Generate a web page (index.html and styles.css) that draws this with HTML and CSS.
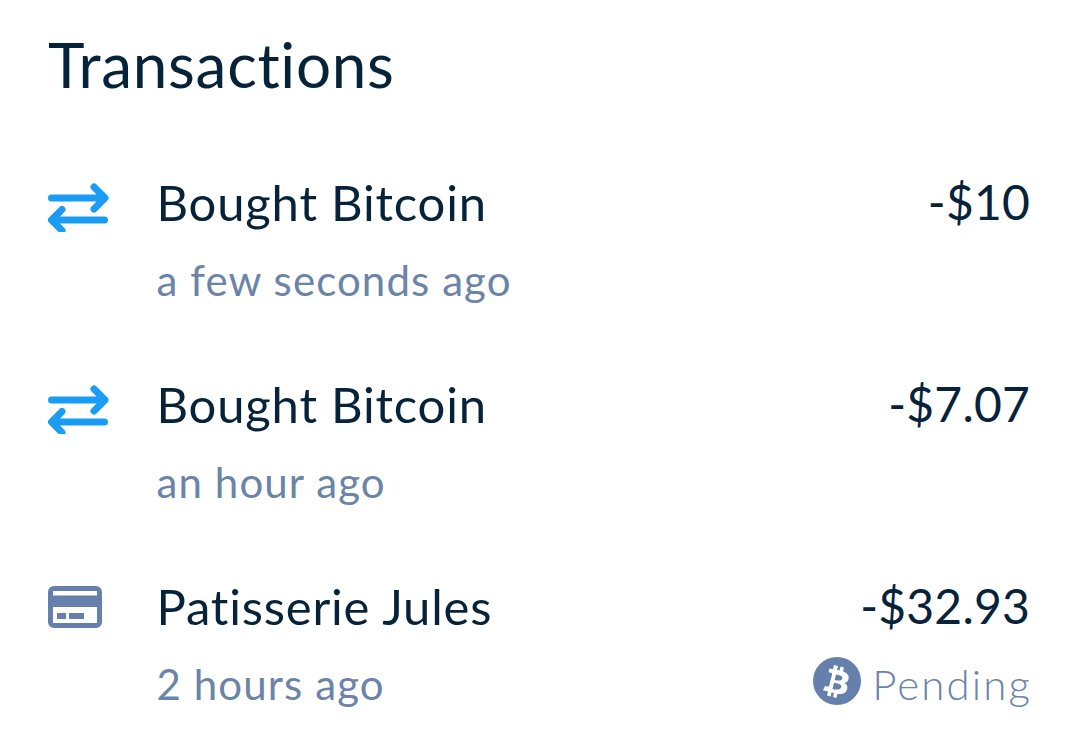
FILE: index.html
```html
<!DOCTYPE html>
<html lang="en">
<head>
<meta charset="utf-8">
<title>Transactions</title>
<link rel="stylesheet" href="styles.css">
</head>
<body>
<main class="panel">
  <h1 class="title">Transactions</h1>
  <ul class="list">
    <li class="row">
      <div class="icon-cell">
        <svg class="icon" width="62" height="50" viewBox="0 0 62 50"><path d="M3.500 16H56.500M46 5L57 16L46 27M56.500 38H4M14 27.500L3.500 38L14 48.500" fill="none" stroke="#1a9cf5" stroke-width="7" stroke-linecap="round" stroke-linejoin="round"/></svg>
      </div>
      <div class="main">
        <div class="name">Bought Bitcoin</div>
        <div class="time">a few seconds ago</div>
      </div>
      <div class="side">
        <div class="amount">-$10</div>
      </div>
    </li>
    <li class="row">
      <div class="icon-cell">
        <svg class="icon" width="62" height="50" viewBox="0 0 62 50"><path d="M3.500 16H56.500M46 5L57 16L46 27M56.500 38H4M14 27.500L3.500 38L14 48.500" fill="none" stroke="#1a9cf5" stroke-width="7" stroke-linecap="round" stroke-linejoin="round"/></svg>
      </div>
      <div class="main">
        <div class="name">Bought Bitcoin</div>
        <div class="time">an hour ago</div>
      </div>
      <div class="side">
        <div class="amount">-$7.07</div>
      </div>
    </li>
    <li class="row">
      <div class="icon-cell">
        <svg class="icon" width="54" height="42" viewBox="0 0 54 42"><path fill-rule="evenodd" d="M6 0H48A6 6 0 0 1 54 6V36A6 6 0 0 1 48 42H6A6 6 0 0 1 0 36V6A6 6 0 0 1 6 0ZM5 5V9.500H49V5ZM5 21V37H49V21ZM9 27H18V33H9ZM21 27H36V33H21Z" fill="#6580ad"/></svg>
      </div>
      <div class="main">
        <div class="name">Patisserie Jules</div>
        <div class="time">2 hours ago</div>
      </div>
      <div class="side">
        <div class="amount">-$32.93</div>
        <div class="status">
          <svg class="btc" width="48" height="48" viewBox="0 0 48 48"><circle cx="24" cy="24" r="24" fill="#6580ad"/><path fill-rule="evenodd" fill="#fff" d="M21 8L25 9L24 13L26.500 13.600L27.500 9.600L31 10.500L30 14.500C34 16 36.500 18.500 35.500 22C35 24.500 33.500 25.500 31.500 26C34 27.500 35 29.500 34 32.500C32.500 37 29 37.500 24.500 36.700L23.500 41L20 40L21 36L18.500 35.400L17.500 39.500L14 38.500L15 34.500L10 33.200L12 29L14.500 29.600C15.500 29.800 16 29.300 16.200 28.500L19 17.500C19.200 16.500 18.800 16 18 15.800L15.500 15.200L16.500 11.500L20 12.300ZM23 17.500L21.700 23C24 23.600 28.500 24.500 29.300 21.500C30 18.500 25.500 18 23 17.500ZM21 25.800L19.500 32C22.500 32.700 27.500 33.500 28.300 30C29 27 23.800 26.400 21 25.800Z"/></svg>
          <span class="pending">Pending</span>
        </div>
      </div>
    </li>
  </ul>
</main>
</body>
</html>
```
FILE: styles.css
```css
* { box-sizing: border-box; }
html, body { margin: 0; padding: 0; background: #fff; }
body { width: 1080px; height: 750px; overflow: hidden; font-family: "Lato", "Noto Sans", sans-serif; }
.panel { padding: 30px 50px 0 48px; }
.title { margin: 0; font-size: 62px; line-height: 68px; font-weight: 400; color: #06233a; letter-spacing: 0.7px; }
.list { list-style: none; margin: 74px 0 0; padding: 0; display: flex; flex-direction: column; gap: 70px; }
.row { display: flex; height: 132px; align-items: flex-start; }
.icon-cell { width: 108.500px; flex: none; padding-top: 10px; }
.icon { display: block; }
.main { flex: 1; }
.name { font-size: 49px; line-height: 60px; color: #06233a; letter-spacing: 0.8px; }
.amount { font-size: 48px; line-height: 60px; color: #06233a; letter-spacing: 0.2px; }
.time { margin-top: 20px; font-size: 42px; line-height: 56px; color: #6b84a8; letter-spacing: 1.1px; }
.side { display: flex; flex-direction: column; align-items: flex-end; }
.status { margin-top: 17px; margin-right: -2px; display: flex; align-items: center; gap: 11px; height: 56px; }
.pending { padding-top: 6px; font-size: 42px; line-height: 56px; font-weight: 300; color: #6b84a8; letter-spacing: 2.1px; }
```
